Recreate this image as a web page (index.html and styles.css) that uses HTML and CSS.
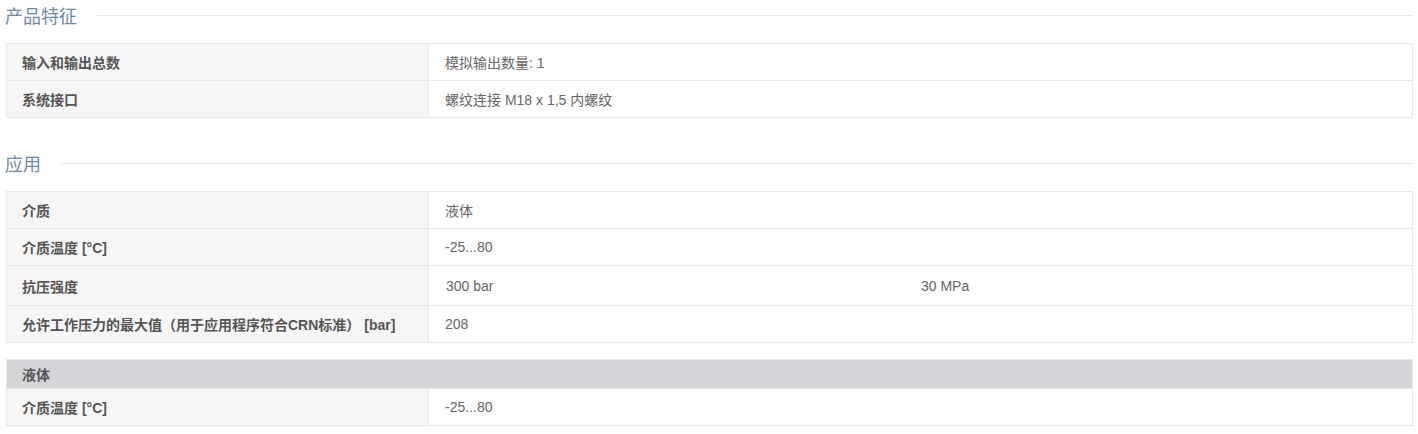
FILE: index.html
```html
<!DOCTYPE html>
<html lang="zh-CN">
<head>
<meta charset="UTF-8" />
<meta name="viewport" content="width=device-width, initial-scale=1" />
<title>产品特征</title>
<link rel="stylesheet" href="styles.css">
</head>
<body>

<div class="specs">
  <h2 class="section-title"><span>产品特征</span></h2>
  <table class="spec-table">
    <colgroup><col class="label-col"><col></colgroup>
    <tr>
      <th>输入和输出总数</th>
      <td>模拟输出数量: 1</td>
    </tr>
    <tr>
      <th>系统接口</th>
      <td>螺纹连接 M18 x 1,5 内螺纹</td>
    </tr>
  </table>

  <h2 class="section-title"><span>应用</span></h2>
  <table class="spec-table">
    <colgroup><col class="label-col"><col></colgroup>
    <tr>
      <th>介质</th>
      <td>液体</td>
    </tr>
    <tr>
      <th>介质温度 [°C]</th>
      <td>-25...80</td>
    </tr>
    <tr class="tall">
      <th>抗压强度</th>
      <td>
        <div class="split">
          <span>300 bar</span>
          <span>30 MPa</span>
        </div>
      </td>
    </tr>
    <tr>
      <th>允许工作压力的最大值（用于应用程序符合CRN标准） [bar]</th>
      <td>208</td>
    </tr>
  </table>

  <table class="spec-table sub">
    <colgroup><col class="label-col"><col></colgroup>
    <tr class="group">
      <th colspan="2">液体</th>
    </tr>
    <tr>
      <th>介质温度 [°C]</th>
      <td>-25...80</td>
    </tr>
  </table>
</div>

</body>
</html>
```

FILE: styles.css
```css
body {
  margin: 0;
  background: #fff;
  font-family: "Liberation Sans", "Noto Sans CJK SC", Arial, sans-serif;
  font-size: 14px;
  color: #666;
}
.specs {
  padding: 0 5px 0 6px;
}
.section-title {
  display: flex;
  align-items: center;
  gap: 20px;
  height: 30px;
  margin: 0 0 13px -1px;
  font-size: 18px;
  font-weight: normal;
  color: #6f8aa3;
}
.section-title::after {
  content: "";
  flex: 1;
  height: 1px;
  background: #e6e6e6;
}
.spec-table + .section-title {
  margin-top: 30px;
}
.spec-table {
  width: 100%;
  border-collapse: collapse;
  table-layout: fixed;
}
.spec-table + .spec-table {
  margin-top: 16px;
}
.label-col {
  width: 422px;
}
.spec-table th,
.spec-table td {
  height: 36px;
  padding: 0 16px 0 15px;
  border: 1px solid #e8e8e8;
  text-align: left;
  vertical-align: middle;
}
.spec-table th {
  background: #f6f6f6;
  color: #555;
  font-weight: bold;
}
.spec-table td {
  padding-left: 16px;
  background: #fff;
}
.spec-table tr.tall th,
.spec-table tr.tall td {
  height: 39px;
}
.split {
  display: flex;
  padding-left: 1px;
}
.split span {
  flex: 1;
}
.spec-table tr.group th {
  height: 28px;
  background: #d6d5da;
  color: #555;
}
```
